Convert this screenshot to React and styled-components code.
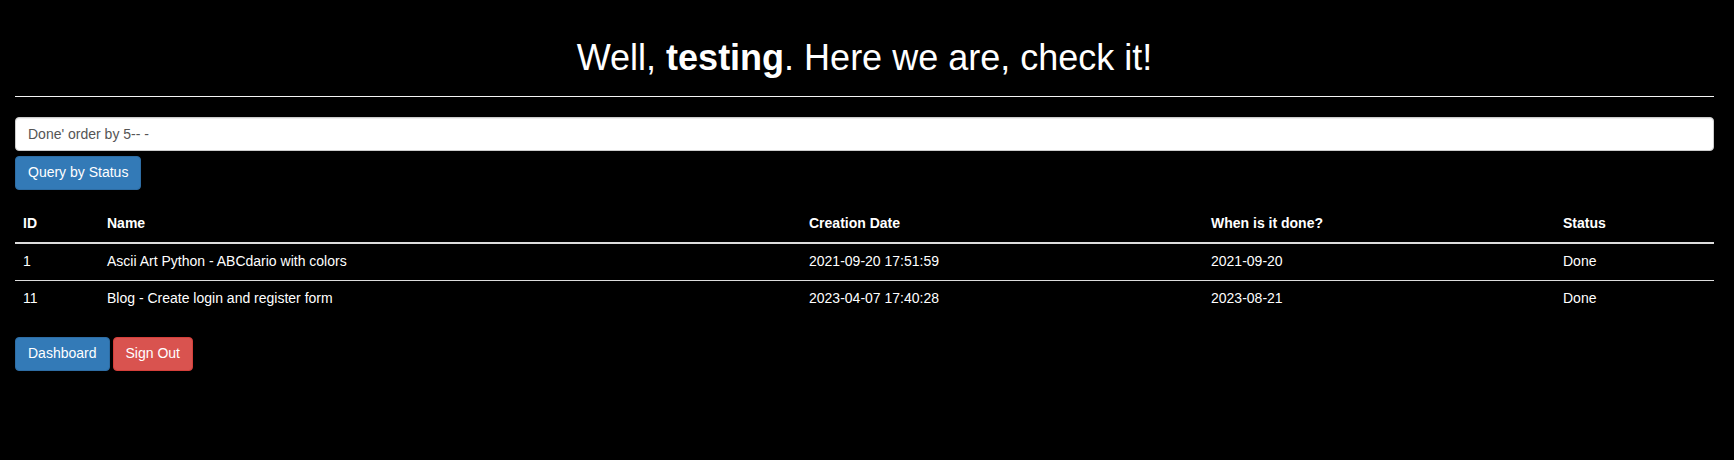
import React from 'react';
import styled, { createGlobalStyle } from 'styled-components';

const GlobalStyle = createGlobalStyle`
    * { box-sizing: border-box; }
    body {
        margin: 0;
        background-color: #000000;
        color: #FFFFFF;
        font-family: "Liberation Sans", Arial, sans-serif;
        font-size: 14px;
        line-height: 1.42857;
    }
`;

const Page = styled.div`
    padding: 16px 20px 0 15px;
`;

const Title = styled.h1`
    margin: 22px 0 10px;
    font-size: 36px;
    font-weight: normal;
    line-height: 1.1;
    text-align: center;
    color: #FFFFFF;
    b { font-weight: bold; }
`;

const Divider = styled.hr`
    margin: 18px 0 20px;
    border: 0;
    border-top: 1px solid #F4F4F4;
`;

const Form = styled.form`
    margin: 0 0 16px;
`;

const Input = styled.input`
    display: block;
    width: 100%;
    height: 34px;
    padding: 6px 12px;
    margin: 0 0 5px;
    font-family: inherit;
    font-size: 14px;
    line-height: 1.42857;
    color: #555555;
    background-color: #FFFFFF;
    border: 1px solid #CCCCCC;
    border-radius: 4px;
    box-shadow: inset 0 1px 1px rgba(0, 0, 0, 0.075);
    outline: none;
`;

const Button = styled.button`
    display: inline-block;
    height: 34px;
    padding: 6px 12px;
    margin: 0 ${props => props.gap ? "3px" : "0"} 0 0;
    font-family: inherit;
    font-size: 14px;
    line-height: 1.42857;
    color: #FFFFFF;
    background-color: ${props => props.danger ? "#d9534f" : "#337ab7"};
    border: 1px solid ${props => props.danger ? "#d43f3a" : "#2e6da4"};
    border-radius: 4px;
    cursor: pointer;
`;

const Table = styled.table`
    width: 100%;
    margin-bottom: 20px;
    border-collapse: collapse;
    border-spacing: 0;
`;

const Th = styled.th`
    width: ${props => props.width};
    padding: 8px;
    text-align: left;
    font-weight: bold;
    line-height: 1.42857;
    border-bottom: 2px solid #DDDDDD;
`;

const Td = styled.td`
    padding: 8px;
    line-height: 1.42857;
    border-top: ${props => props.first ? "0" : "1px solid #DDDDDD"};
`;

const rows = [
    { id: 1, name: "Ascii Art Python - ABCdario with colors", created: "2021-09-20 17:51:59", done: "2021-09-20", status: "Done" },
    { id: 11, name: "Blog - Create login and register form", created: "2023-04-07 17:40:28", done: "2023-08-21", status: "Done" },
];

const App = () => {
    return <Page>
        <GlobalStyle />
        <Title>Well, <b>testing</b>. Here we are, check it!</Title>
        <Divider />

        <Form onSubmit={e => e.preventDefault()}>
            <Input type="text" defaultValue="Done' order by 5-- -" />
            <Button type="submit">Query by Status</Button>
        </Form>

        <Table>
            <thead>
                <tr>
                    <Th width="84px">ID</Th>
                    <Th width="702px">Name</Th>
                    <Th width="402px">Creation Date</Th>
                    <Th width="352px">When is it done?</Th>
                    <Th>Status</Th>
                </tr>
            </thead>
            <tbody>
                {rows.map((r, i) => (
                    <tr key={r.id}>
                        <Td first={i === 0}>{r.id}</Td>
                        <Td first={i === 0}>{r.name}</Td>
                        <Td first={i === 0}>{r.created}</Td>
                        <Td first={i === 0}>{r.done}</Td>
                        <Td first={i === 0}>{r.status}</Td>
                    </tr>
                ))}
            </tbody>
        </Table>

        <div>
            <Button gap>Dashboard</Button>
            <Button danger>Sign Out</Button>
        </div>
    </Page>
};

export default App;
